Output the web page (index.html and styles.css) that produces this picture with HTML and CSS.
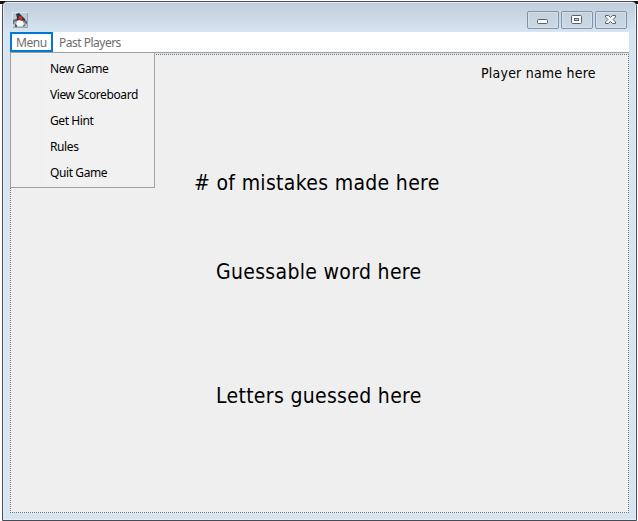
FILE: index.html
```html
<!DOCTYPE html>
<html lang="en">
<head>
<meta charset="utf-8">
<title>Word game</title>
<link rel="stylesheet" href="styles.css">
</head>
<body>
<div class="window">
  <header class="titlebar">
    <svg class="app-icon" width="16" height="16" viewBox="0 0 16 16">
      <rect width="16" height="16" fill="#bccbd9"/>
      <path d="M0 0h16v1H1v15H0z" fill="#dce5ee"/>
      <path d="M15 1h1v15H1v-1h14z" fill="#98a6b4"/>
      <path d="M4 2l3-1 3 3 3 3 1 3H3l2-4z" fill="#333538"/>
      <path d="M1 8l3-1 2 2-1 3H1zM11 8l4 1v3l-4 1z" fill="#666a6e"/>
      <path d="M2 10l2-1 2 2h4l3-1 1 2-1 2H3l-1-2z" fill="#a8aaac"/>
      <path d="M5 9l2-1 4 1 1 4-2 1H6l-2-1z" fill="#f5f6f7"/>
      <path d="M3 12l2 1v2H3zM12 12l1 2-2 1z" fill="#55595d"/>
      <circle cx="8.500" cy="6" r="2" fill="#dc2a30"/>
    </svg>
    <div class="controls">
      <button class="control" aria-label="Minimize"><svg width="14" height="12"><rect x="1.500" y="5.500" width="10" height="4" rx="1" fill="#fff" stroke="#5b606c"/></svg></button>
      <button class="control" aria-label="Maximize"><svg width="14" height="12"><rect x="1.500" y="1.500" width="10" height="8" rx="1" fill="#fff" stroke="#5b606c"/><rect x="4.500" y="4.500" width="4" height="2" fill="#c6d3e1" stroke="#5b606c"/></svg></button>
      <button class="control" aria-label="Close"><svg width="14" height="12"><path d="M1.500 1.500h3l2 2 2-2h3v1.500L9 5.500 11.500 8v1.500h-3l-2-2-2 2h-3V8L4 5.500 1.500 3z" fill="#fff" stroke="#5b606c"/></svg></button>
    </div>
  </header>
  <nav class="menubar">
    <div class="menu menu-open"><span class="menu-label">Menu</span>
      <ul class="dropdown">
        <li>New Game</li>
        <li>View Scoreboard</li>
        <li>Get Hint</li>
        <li>Rules</li>
        <li>Quit Game</li>
      </ul>
    </div>
    <div class="menu players-label">Past Players</div>
  </nav>
  <main class="board">
    <p class="player">Player name here</p>
    <p class="line mistakes"># of mistakes made here</p>
    <p class="line word">Guessable word here</p>
    <p class="line letters">Letters guessed here</p>
  </main>
</div>
</body>
</html>
```
FILE: styles.css
```css
* { box-sizing: border-box; }
body { margin: 0; width: 638px; height: 521px; overflow: hidden; background: linear-gradient(#fff 1px, #111 1px, #111 4px, #fff 4px); }
.window {
  margin: 1px 1px 0 2px; height: 520px; padding: 0 7px 7px;
  border: 1px solid #484b51; border-radius: 5px 5px 0 0;
  background: linear-gradient(#bfccda, #d7e4f2 30px);
  box-shadow: inset 0 0 0 1px #e5eef7;
}
.titlebar { height: 30px; display: flex; justify-content: space-between; padding: 10px 2px 0 2px; }
.app-icon { display: block; }
.controls { display: flex; gap: 2px; margin-top: -1px; }
.control {
  width: 32px; height: 18px; padding: 0; display: grid; place-items: center;
  border: 1px solid #8292ab; border-radius: 2px; background: linear-gradient(#c3d0de, #cbd8e6);
  box-shadow: inset 0 0 0 1px #d6e0eb;
}
.control svg { display: block; }
.menubar {
  height: 21px; display: flex; background: #fff; border-bottom: 1px solid #a0a0a0;
  font: 12px/20px "Noto Sans", sans-serif; color: #6d6d6d;
}
.menu { position: relative; height: 20px; padding-left: 6px; white-space: nowrap; }
.menu-open { width: 43px; border: 2px solid #0078d7; padding-left: 4px; line-height: 18px; }
.menu-label { letter-spacing: -.4px; }
.players-label { letter-spacing: -.5px; line-height: 22px; }
.dropdown {
  position: absolute; z-index: 1; left: -2px; top: 18px; width: 145px; height: 136px;
  margin: 0; padding: 3px 0 0; list-style: none; border: 1px solid #a0a0a0;
  background: linear-gradient(90deg, #f0f0f0 34px, #f3f3f3 34px, #f3f3f3 35px, #f1f1f1 35px); color: #000;
}
.dropdown li { height: 26px; line-height: 26px; padding-left: 39px; letter-spacing: -.4px; }
.board {
  height: 459px; margin-top: 1px; border: 1px dotted #777; background: #efefef; color: #000;
  font-family: "DejaVu Sans Condensed", "DejaVu Sans", sans-serif; font-stretch: condensed;
}
.board p { margin: 0; white-space: nowrap; }
.board .player { height: 36px; padding-left: 470px; font-size: 14px; line-height: 36px; letter-spacing: .22px; }
.line { font-size: 21px; line-height: 30px; letter-spacing: .32px; }
.board .mistakes { margin: 77px 0 0 183px; }
.board .word { margin: 59px 0 0 205px; }
.board .letters { margin: 94px 0 0 205px; }
```
